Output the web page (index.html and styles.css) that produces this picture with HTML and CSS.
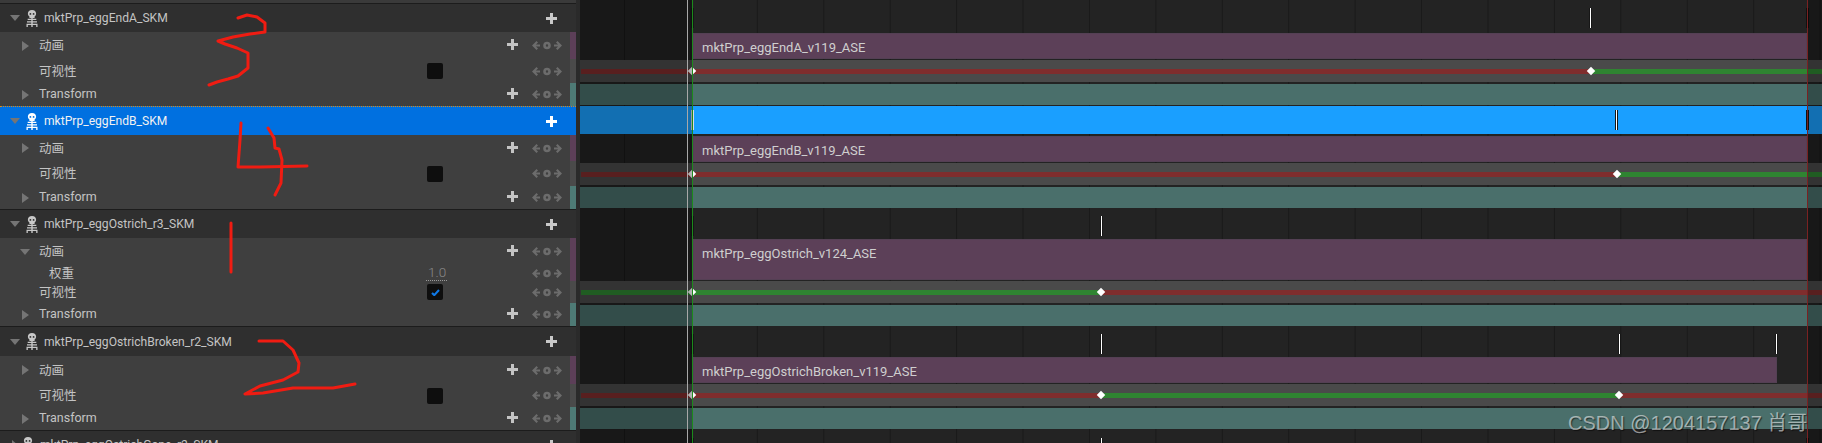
FILE: index.html
```html
<!DOCTYPE html>
<html lang="zh">
<head>
<meta charset="utf-8">
<title>Sequencer</title>
<link rel="stylesheet" href="styles.css">
</head>
<body>
<svg class="defs" width="0" height="0" aria-hidden="true">
  <symbol id="skel" viewBox="0 0 12 17">
    <path fill-rule="evenodd" d="M6 0C3.400 0 1.900 1.500 1.900 3.600c0 1.400.6 2.300 1.500 2.900V8h5.200V6.500c.9-.6 1.500-1.500 1.500-2.900C10.100 1.500 8.600 0 6 0zM4.400 3a.9.9 0 1 1 0 1.800.9.9 0 0 1 0-1.800zm3.200 0a.9.9 0 1 1 0 1.800.9.9 0 0 1 0-1.800z"/>
    <path d="M5.300 8h1.400v9H5.300zM1.700 8.800h8.600v1.300H1.700zM1 11.300h10v1.300H1zM.5 13.800h11v1.300H.5zM.5 13.800h1.300V17H.5zM10.200 13.800h1.300V17h-1.300z"/>
  </symbol>
  <symbol id="plus" viewBox="0 0 11 11">
    <path d="M4 0h3v4h4v3H7v4H4V7H0V4h4z"/>
  </symbol>
  <symbol id="trio" viewBox="0 0 30 9">
    <path d="M4.500 0 6 1.400 3.900 3.500H8v2H3.900L6 7.600 4.500 9 0 4.500zM25.500 0 24 1.400 26.100 3.500H22v2h4.100L24 7.600 25.500 9 30 4.500z"/>
    <path fill-rule="evenodd" d="M15 .7a3.800 3.800 0 1 1 0 7.600 3.800 3.800 0 0 1 0-7.600zm0 2.600a1.200 1.200 0 1 0 0 2.400 1.200 1.200 0 0 0 0-2.400z"/>
  </symbol>
</svg>

<div class="app">
  <section class="panel">
    <div class="panel-top"></div>

    <div class="head"><i class="tri-d"></i><svg class="skel"><use href="#skel"/></svg><span>mktPrp_eggEndA_SKM</span><svg class="plus-h"><use href="#plus"/></svg></div>
    <div class="sub h27 anim"><i class="tri-r"></i><span>动画</span><b></b><svg class="plus"><use href="#plus"/></svg><svg class="trio"><use href="#trio"/></svg><em></em></div>
    <div class="sub h24 vis"><i></i><span>可视性</span><b><i class="box"></i></b><u></u><svg class="trio"><use href="#trio"/></svg><em></em></div>
    <div class="sub h23 xf"><i class="tri-r"></i><span>Transform</span><b></b><svg class="plus"><use href="#plus"/></svg><svg class="trio"><use href="#trio"/></svg><em></em></div>

    <div class="head sel"><i class="tri-d"></i><svg class="skel"><use href="#skel"/></svg><span>mktPrp_eggEndB_SKM</span><svg class="plus-h"><use href="#plus"/></svg></div>
    <div class="sub h26 anim"><i class="tri-r"></i><span>动画</span><b></b><svg class="plus"><use href="#plus"/></svg><svg class="trio"><use href="#trio"/></svg><em></em></div>
    <div class="sub h25 vis"><i></i><span>可视性</span><b><i class="box"></i></b><u></u><svg class="trio"><use href="#trio"/></svg><em></em></div>
    <div class="sub h23 xf"><i class="tri-r"></i><span>Transform</span><b></b><svg class="plus"><use href="#plus"/></svg><svg class="trio"><use href="#trio"/></svg><em></em></div>

    <div class="head line"><i class="tri-d"></i><svg class="skel"><use href="#skel"/></svg><span>mktPrp_eggOstrich_r3_SKM</span><svg class="plus-h"><use href="#plus"/></svg></div>
    <div class="sub h27 anim"><i class="tri-e"></i><span>动画</span><b></b><svg class="plus"><use href="#plus"/></svg><svg class="trio"><use href="#trio"/></svg><em></em></div>
    <div class="sub h16 anim"><i></i><span class="ind">权重</span><b><span class="num">1.0</span></b><u></u><svg class="trio"><use href="#trio"/></svg><em></em></div>
    <div class="sub h22 vis"><i></i><span>可视性</span><b><i class="box on"><svg viewBox="0 0 10 8"><path d="M1 4.500 3.600 7 9 1.200"/></svg></i></b><u></u><svg class="trio"><use href="#trio"/></svg><em></em></div>
    <div class="sub h23 xf"><i class="tri-r"></i><span>Transform</span><b></b><svg class="plus"><use href="#plus"/></svg><svg class="trio"><use href="#trio"/></svg><em></em></div>

    <div class="head line tall"><i class="tri-d"></i><svg class="skel"><use href="#skel"/></svg><span>mktPrp_eggOstrichBroken_r2_SKM</span><svg class="plus-h"><use href="#plus"/></svg></div>
    <div class="sub h28 anim"><i class="tri-r"></i><span>动画</span><b></b><svg class="plus"><use href="#plus"/></svg><svg class="trio"><use href="#trio"/></svg><em></em></div>
    <div class="sub h23 vis"><i></i><span>可视性</span><b><i class="box"></i></b><u></u><svg class="trio"><use href="#trio"/></svg><em></em></div>
    <div class="sub h23 xf"><i class="tri-r"></i><span>Transform</span><b></b><svg class="plus"><use href="#plus"/></svg><svg class="trio"><use href="#trio"/></svg><em></em></div>

    <div class="head line"><i class="tri-c"></i><svg class="skel"><use href="#skel"/></svg><span>mktPrp_eggOstrichGone_r2_SKM</span><svg class="plus-h"><use href="#plus"/></svg></div>
  </section>

  <div class="splitter"></div>

  <section class="timeline">
    <div class="keys h33"><i class="tk tg" style="left:111px"></i><i class="tk" style="left:1009px"></i><i class="tk td" style="left:1226px"></i></div>
    <div class="clip h26">mktPrp_eggEndA_v119_ASE</div>
    <div class="vtrack m1"><div class="bar"><s class="r" style="width:1010px"></s><s class="g"></s></div><i class="dia" style="left:112px"></i><i class="dia" style="left:1011px"></i></div>
    <div class="teal m2"></div>
    <div class="bluerow m1"><i class="tk tb" style="left:111px"></i><i class="tk" style="left:1035px"></i><i class="tk td" style="left:1226px"></i></div>

    <div class="clip h26 m2">mktPrp_eggEndB_v119_ASE</div>
    <div class="vtrack m1"><div class="bar"><s class="r" style="width:1036px"></s><s class="g"></s></div><i class="dia" style="left:112px"></i><i class="dia" style="left:1037px"></i></div>
    <div class="teal m2"></div>

    <div class="keys h31"><i class="tk tg" style="left:111px"></i><i class="tk" style="left:520px"></i></div>
    <div class="clip h41">mktPrp_eggOstrich_v124_ASE</div>
    <div class="vtrack m1"><div class="bar"><s class="g" style="width:520px"></s><s class="r"></s></div><i class="dia" style="left:112px"></i><i class="dia" style="left:521px"></i></div>
    <div class="teal m2"></div>

    <div class="keys h31"><i class="tk tg" style="left:111px"></i><i class="tk" style="left:520px"></i><i class="tk" style="left:1038px"></i><i class="tk" style="left:1195px"></i></div>
    <div class="clip h26 short">mktPrp_eggOstrichBroken_v119_ASE</div>
    <div class="vtrack m1"><div class="bar"><s class="r" style="width:520px"></s><s class="g" style="width:518px"></s><s class="r"></s></div><i class="dia" style="left:112px"></i><i class="dia" style="left:521px"></i><i class="dia" style="left:1039px"></i></div>
    <div class="teal m2"></div>
    <div class="keys h14"><i class="tk tg" style="left:111px"></i><i class="tk" style="left:520px"></i><i class="tk td" style="left:1226px"></i></div>

    <div class="shade shade-l"></div>
    <div class="shade shade-r"></div>
    <div class="mark mark-w"></div>
    <div class="mark mark-g"></div>
    <div class="mark mark-r"></div>
  </section>

  <svg class="ink" viewBox="0 0 1822 443" aria-hidden="true">
    <path d="M238 18 247 15 257 17 265 23 265 32 250 34 233 37 218 41 225 44 237 48 248 53 248 68 238 76 228 79 217 82 209 85"/>
    <path d="M241 123 240 140 238 167 260 167 307 166"/>
    <path d="M268 128 274 138 275 148 279 149 282 160 281 183 275 195"/>
    <path d="M231 223V272"/>
    <path d="M259 341 283 341 293 350 299 363 298 372 283 380 260 386 245 394 263 393 293 388 333 388 355 384"/>
  </svg>

  <div class="wm">CSDN @1204157137 肖哥</div>
</div>
</body>
</html>
```
FILE: styles.css
```css
* { box-sizing: border-box; }
html, body { margin: 0; height: 100%; background: #232323; overflow: hidden; }
body { font-family: Roboto, "Noto Sans CJK SC", sans-serif; font-size: 12px; color: #c4c4c4; }
.defs { position: absolute; }

.app { position: relative; display: flex; width: 1822px; height: 443px; overflow: hidden; }

/* left outliner */
.panel { flex: 0 0 576px; height: 443px; overflow: hidden; background: #3f3f3f; }
.panel-top { height: 4px; background: #3a3a3a; border-bottom: 1px solid #1c1c1c; }

.head { display: flex; align-items: center; height: 28px; background: #2f2f2f; padding: 0 19px 0 10px; flex-shrink: 0; font-size: 12.100px; }
.head span { margin-left: 6px; }
.head .skel { margin-left: 6px; }
.head.line { height: 29px; border-top: 1px solid #1c1c1c; }
.head.tall { height: 30px; }
.head.sel { height: 29px; background: #0070e0; color: #f2f2f2; border-top: 1px dotted #e08a10; }
.head.sel .skel, .head.sel .plus-h { fill: #fff; }

.skel { width: 12px; height: 17px; fill: #c8c8c8; flex: none; }
.plus-h { width: 11px; height: 11px; fill: #c8c8c8; margin-left: auto; flex: none; }

.tri-d { flex: none; width: 0; height: 0; border: 5.500px solid transparent; border-top: 6px solid #757575; border-bottom: 0; }
.tri-c { flex: none; width: 0; height: 0; margin-left: 2px; margin-right: -2px; border: 5px solid transparent; border-left: 6px solid #757575; border-right: 0; }

.sub { display: grid; grid-template-columns: 39px 388px 78px 25px 40px 6px; grid-auto-rows: 100%; align-items: center; font-size: 12.500px; }
.sub > i { display: block; }
.sub > span { padding-bottom: 2px; }
.sub > b { font-weight: 400; display: flex; }
.sub > em { align-self: stretch; }
.sub > span.ind { padding-left: 10px; }
.anim > em { background: #5c3f58; }
.vis > em { background: #4a4a4a; }
.xf > em { background: #4e7a75; }

.h16 { height: 16px; } .h22 { height: 22px; } .h23 { height: 23px; } .h24 { height: 24px; }
.h25 { height: 25px; } .h26 { height: 26px; } .h27 { height: 27px; } .h28 { height: 28px; }
.h31 { height: 31px; } .h33 { height: 33px; } .h41 { height: 41px; } .h14 { height: 14px; }

.tri-r { width: 0; height: 0; margin-left: 22px; border: 5.500px solid transparent; border-left: 7px solid #757575; border-right: 0; }
.tri-e { width: 0; height: 0; margin-left: 20px; border: 5.500px solid transparent; border-top: 6px solid #757575; border-bottom: 0; }

.plus { width: 11px; height: 11px; fill: #c4c4c4; margin: -2px 0 0 2px; }
.trio { width: 30px; height: 9px; fill: #6c6c6c; margin-left: 2px; }

.box { display: flex; align-items: center; justify-content: center; width: 16px; height: 16px; background: #0e0e0e; border-radius: 2px; }
.box svg { width: 9px; height: 7px; fill: none; stroke: #0f78e6; stroke-width: 2.400; }
.num { display: block; width: 21px; margin-left: -1px; padding: 0 0 0 2px; font-size: 13.500px; line-height: 15px; font-weight: 300; color: #8a8a8a; border-bottom: 1px dotted #9a9a9a; }

.splitter { flex: 0 0 4px; background: #2a2a2a; }

/* timeline */
.timeline {
  position: relative; flex: 1; height: 443px; overflow: hidden;
  background: #232323 linear-gradient(90deg, #191919 1px, transparent 1px) 44px 0 / 66.430px 100%;
}
.keys, .bluerow { position: relative; }
.tk { position: absolute; top: 8px; width: 3px; height: 20px; background: #fff; border: solid #161616; border-width: 0 1px; }
.keys.h14 .tk { top: 9px; }
.tg { background: #bcd8bc; }
.td { background: #111; border-color: #111; }
.tb { background: #2a2a2a; border-color: #ddd; }
.bluerow { height: 28px; background: #1a9fff; }
.bluerow .tk { top: 4px; }

.clip { margin-left: 113px; margin-right: 15px; padding-left: 9px; font-size: 13px; line-height: 29px; background: #5c4058; color: #cfcfcf; box-shadow: inset 0 0 0 1px #544054; }
.clip.short { margin-right: 45px; }

.m1 { margin-top: 1px; }
.m2 { margin-top: 2px; }

.vtrack { position: relative; height: 22px; background: #4a4a4a; padding: 9px 0 0 1px; }
.bar { display: flex; height: 5px; }
.bar s { display: block; }
.bar .r { background: #7f2d2d; }
.bar .g { background: #2f8431; }
.bar s:last-child { flex: 1; }
.dia { position: absolute; top: 8px; width: 6px; height: 6px; margin-left: -3px; background: #fff; transform: rotate(45deg); }

.teal { height: 21px; background: #4a6f6b; }

.shade { position: absolute; top: 0; bottom: 0; background: rgba(0, 0, 0, .3); }
.shade-l { left: 0; width: 112px; }
.shade-r { left: 1227px; right: 0; }

.mark { position: absolute; top: 0; bottom: 0; width: 1px; }
.mark-w { left: 107px; background: #a8a8a8; }
.mark-g { left: 112px; background: #1c8a1c; }
.mark-r { left: 1227px; background: #7a2222; }

/* overlays on the screenshot */
.ink { position: absolute; left: 0; top: 0; width: 1822px; height: 443px; fill: none; stroke: #f01c12; stroke-width: 3; stroke-linecap: round; stroke-linejoin: round; pointer-events: none; }

.wm { position: absolute; left: 1568px; top: 411px; font-family: "Liberation Sans", "Noto Sans CJK SC", sans-serif; font-size: 20px; line-height: 24px; white-space: nowrap; color: rgba(255, 255, 255, .55); text-shadow: 1px 1px 1px rgba(0, 0, 0, .55); }
```
